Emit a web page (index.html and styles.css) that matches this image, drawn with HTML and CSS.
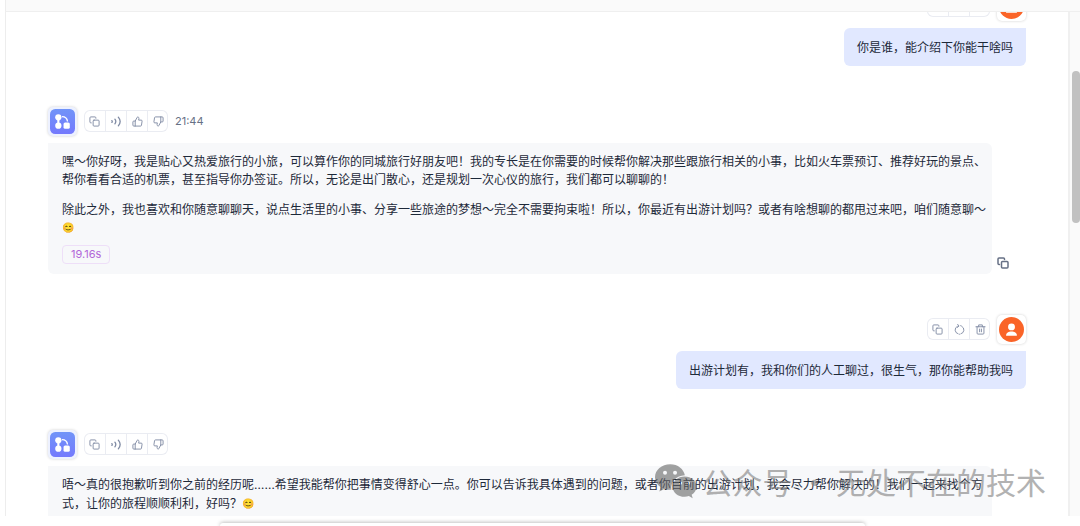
FILE: index.html
```html
<!DOCTYPE html>
<html lang="zh-CN">
<head>
<meta charset="utf-8">
<title>小旅</title>
<link rel="stylesheet" href="styles.css">
</head>
<body>
<svg class="defs" aria-hidden="true">
  <symbol id="copy" viewBox="0 0 24 24"><rect x="9" y="9" width="13" height="13" rx="2"/><path d="M5 15H4a2 2 0 0 1-2-2V4a2 2 0 0 1 2-2h9a2 2 0 0 1 2 2v1"/></symbol>
  <symbol id="sound" viewBox="0 0 24 24"><path d="M2 10q1.500 2 0 4M8.500 7q4 5 0 10M16 2.500q8 9.500 0 19" stroke-width="2.800"/></symbol>
  <symbol id="up" viewBox="0 0 24 24"><path d="M7 22V11l4.300-8.200c.4-.7 1.400-.9 2.100-.6 1.400.5 1.900 1.900 1.700 3.300L14.500 9H20a2 2 0 0 1 2 2.300l-1.400 9A2 2 0 0 1 18.600 22H4a2 2 0 0 1-2-2v-7a2 2 0 0 1 2-2h3"/></symbol>
  <symbol id="down" viewBox="0 0 24 24"><path d="M17 2v11l-4.300 8.200c-.4.7-1.400.9-2.100.6-1.400-.5-1.900-1.900-1.700-3.300L9.500 15H4a2 2 0 0 1-2-2.300l1.400-9A2 2 0 0 1 5.400 2H20a2 2 0 0 1 2 2v7a2 2 0 0 1-2 2h-3"/></symbol>
  <symbol id="retry" viewBox="0 0 24 24"><path d="M7.500 4.800a9 9 0 0 0 1.500 16.700M15 21.500a9 9 0 0 0 2-16.500M12 22.300h.1M8 .8l3 3.700-3.800 3M14.500 3.700l1 .4"/></symbol>
  <symbol id="trash" viewBox="0 0 24 24"><path d="M2 6h20M8 6V2h8v4M4.500 6v14a2 2 0 0 0 2 2h11a2 2 0 0 0 2-2V6M10 11v6M14 11v6"/></symbol>
  <symbol id="bot" viewBox="0 0 24 24"><rect width="24" height="24" rx="5" fill="url(#botfill)"/><g fill="#fff"><circle cx="8" cy="8" r="3"/><circle cx="8" cy="16" r="3"/><path d="M7 8h2v8H7z"/><rect x="13" y="13" width="6" height="6" rx="1.500"/></g><path d="M11.500 7.300c3.200 0 5 1.700 5.300 4.700" fill="none" stroke="#fff" stroke-width="1.300"/></symbol>
  <symbol id="person" viewBox="0 0 24 24"><circle cx="12" cy="12" r="12" fill="#fa6428"/><circle cx="12" cy="9.500" r="3.300" fill="#fff"/><path d="M6.800 18c0-3 2.500-4 5.200-4s5.200 1 5.200 4z" fill="#fff"/></symbol>
  <linearGradient id="botfill" x1="0" y1="0" x2="0" y2="1"><stop offset="0" stop-color="#7194f8"/><stop offset="1" stop-color="#7479fd"/></linearGradient>
</svg>

<div class="app">
  <div class="topbar"></div>
  <div class="body">
    <main class="chat">
      <article class="msg user">
        <div class="head">
          <div class="tools">
            <button aria-label="复制"><svg><use href="#copy"/></svg></button><button aria-label="重试"><svg><use href="#retry"/></svg></button><button aria-label="删除"><svg><use href="#trash"/></svg></button>
          </div>
          <div class="avatar"><svg><use href="#person"/></svg></div>
        </div>
        <div class="bubble"><p>你是谁，能介绍下你能干啥吗</p></div>
      </article>

      <article class="msg bot">
        <div class="head">
          <div class="avatar"><svg><use href="#bot"/></svg></div>
          <div class="tools">
            <button aria-label="复制"><svg><use href="#copy"/></svg></button><button aria-label="朗读"><svg><use href="#sound"/></svg></button><button aria-label="赞"><svg><use href="#up"/></svg></button><button aria-label="踩"><svg><use href="#down"/></svg></button>
          </div>
          <time>21:44</time>
        </div>
        <div class="row">
          <div class="bubble">
            <p>嘿～你好呀，我是贴心又热爱旅行的小旅，可以算作你的同城旅行好朋友吧！我的专长是在你需要的时候帮你解决那些跟旅行相关的小事，比如火车票预订、推荐好玩的景点、帮你看看合适的机票，甚至指导你办签证。所以，无论是出门散心，还是规划一次心仪的旅行，我们都可以聊聊的！</p>
            <p>除此之外，我也喜欢和你随意聊聊天，说点生活里的小事、分享一些旅途的梦想～完全不需要拘束啦！所以，你最近有出游计划吗？或者有啥想聊的都甩过来吧，咱们随意聊～<span class="emoji">😊</span></p>
            <span class="badge">19.16s</span>
          </div>
          <button class="copy" aria-label="复制"><svg><use href="#copy"/></svg></button>
        </div>
      </article>

      <article class="msg user">
        <div class="head">
          <div class="tools">
            <button aria-label="复制"><svg><use href="#copy"/></svg></button><button aria-label="重试"><svg><use href="#retry"/></svg></button><button aria-label="删除"><svg><use href="#trash"/></svg></button>
          </div>
          <div class="avatar"><svg><use href="#person"/></svg></div>
        </div>
        <div class="bubble"><p>出游计划有，我和你们的人工聊过，很生气，那你能帮助我吗</p></div>
      </article>

      <article class="msg bot">
        <div class="head">
          <div class="avatar"><svg><use href="#bot"/></svg></div>
          <div class="tools">
            <button aria-label="复制"><svg><use href="#copy"/></svg></button><button aria-label="朗读"><svg><use href="#sound"/></svg></button><button aria-label="赞"><svg><use href="#up"/></svg></button><button aria-label="踩"><svg><use href="#down"/></svg></button>
          </div>
        </div>
        <div class="row">
          <div class="bubble last">
            <p>唔～真的很抱歉听到你之前的经历呢<span class="dots">……</span>希望我能帮你把事情变得舒心一点。你可以告诉我具体遇到的问题，或者你目前的出游计划，我会尽力帮你解决的！我们一起来找个方<wbr>式，让你的旅程顺顺利利，好吗？<span class="emoji">😊</span></p>
          </div>
        </div>
      </article>
    </main>
    <div class="track"><div class="thumb"></div></div>
  </div>
  <div class="composer"></div>
</div>

<div class="watermark">
  <svg viewBox="0 0 44 36"><path fill-rule="evenodd" d="M16 0C7 0 0 6 0 13.500c0 4.300 2.300 8 6 10.400L4.500 28.500l5.300-2.700c2 .6 4 .9 6.200.9h1.200C16 19 22 11.800 31.300 11.500 30 5 24 0 16 0zM10.500 6.700a2.100 2.100 0 1 1 0 4.200 2.100 2.100 0 0 1 0-4.200zM21 6.700a2.100 2.100 0 1 1 0 4.200 2.100 2.100 0 0 1 0-4.200z"/><path fill-rule="evenodd" d="M31 12.800c-7 0-12.500 4.700-12.500 10.600S24 34 31 34c1.600 0 3-.2 4.500-.7l4 2.200-1.100-3.700c3.100-2 5.100-5 5.100-8.400 0-5.900-5.500-10.600-12.500-10.600zM26.800 18a1.700 1.700 0 1 1 0 3.400 1.700 1.700 0 0 1 0-3.400zM35.300 18a1.700 1.700 0 1 1 0 3.400 1.700 1.700 0 0 1 0-3.400z"/></svg>
  <span>公众号 · 无处不在的技术</span>
</div>
</body>
</html>
```

FILE: styles.css
```css
* { box-sizing: border-box; }
body {
  margin: 0;
  background: #fff;
  color: #1d2939;
  font: 12px/18px "Noto Sans CJK SC", sans-serif;
}
p { margin: 0; }
.defs { position: absolute; width: 0; height: 0; }
.app {
  height: 100vh;
  overflow: hidden;
  display: flex;
  flex-direction: column;
  padding-left: 5px;
}
.topbar {
  flex: none;
  height: 12px;
  background: #fafafa;
  border-left: 1px solid #ededed;
  border-bottom: 1px solid #efefef;
}
.body {
  flex: 1;
  min-height: 0;
  display: flex;
  border-left: 1px solid #ededed;
}
.chat {
  flex: 1;
  min-width: 0;
  overflow: hidden;
  display: flex;
  flex-direction: column;
  gap: 40px;
  padding: 0 42px;
  border-right: 2px solid #f0f0f0;
}
.msg {
  flex: none;
  display: flex;
  flex-direction: column;
  gap: 7px;
}
.msg:first-child { margin-top: -21px; }
.head {
  display: flex;
  align-items: center;
  gap: 7px;
  height: 30px;
}
.user { align-items: flex-end; }
.avatar {
  display: grid;
  place-items: center;
  width: 29px;
  height: 29px;
  border-radius: 5px;
  background: #fff;
  box-shadow: 0 0 3px #00000030;
}
.avatar svg { width: 25px; height: 25px; }
.bot .avatar { background: #edf1ff; }
.tools {
  display: flex;
  height: 22px;
  border-radius: 6px;
  box-shadow: inset 0 0 0 1px #eaecf2;
}
button {
  display: grid;
  place-items: center;
  padding: 0;
  border: 0;
  background: none;
  color: #7f8aa3;
}
.tools button { width: 21px; }
.tools button + button { border-left: 1px solid #eaecf2; }
button svg {
  width: 11px;
  height: 11px;
  fill: none;
  stroke: currentColor;
  stroke-width: 2;
  stroke-linecap: round;
  stroke-linejoin: round;
}
time {
  color: #667085;
  font: 11px/18px Inter, sans-serif;
}
.row {
  display: flex;
  align-items: flex-end;
  gap: 5px;
}
.bubble {
  padding: 10px 13px;
  border-radius: 6px 0 6px 6px;
  background: #e1e8ff;
}
.bot .bubble {
  flex: 1;
  display: flex;
  flex-direction: column;
  align-items: flex-start;
  padding: 9px 5px 10px 14px;
  border-radius: 0 6px 6px 6px;
  background: #f7f8fa;
}
.bubble p + p { margin-top: 12px; }
.badge {
  margin-top: 9px;
  padding: 0 8px;
  border: 1px solid #eedff8;
  border-radius: 4px;
  color: #b267d8;
  font: 11px/17px Inter, sans-serif;
}
.copy {
  width: 29px;
  height: 22px;
  justify-content: start;
  color: #667085;
}
.copy svg { width: 12px; height: 12px; stroke-width: 3; }
.last { margin-right: 34px; }
.bot .last { padding-bottom: 40px; }
.dots { font-family: Inter, sans-serif; }
.emoji {
  font-family: "Noto Color Emoji", sans-serif;
  font-size: 10px;
  line-height: 12px;
  vertical-align: 1px;
}
.track {
  width: 10px;
  padding: 59px 0 0 2px;
  background: #fafafa;
}
.thumb {
  height: 152px;
  border-radius: 4px;
  background: #c1c1c1;
}
.composer {
  flex: none;
  height: 3px;
  margin: 7px 20% 0;
  border-radius: 6px 6px 0 0;
  background: #fff;
  box-shadow: 0 0 4px #00000066;
}
.watermark {
  position: absolute;
  right: 34px;
  bottom: 25px;
  display: flex;
  align-items: center;
  gap: 6px;
  color: #808080;
  opacity: 0.6;
  font-size: 30px;
  line-height: 40px;
  white-space: nowrap;
}
.watermark svg { width: 42px; height: 35px; fill: #666; }
```
